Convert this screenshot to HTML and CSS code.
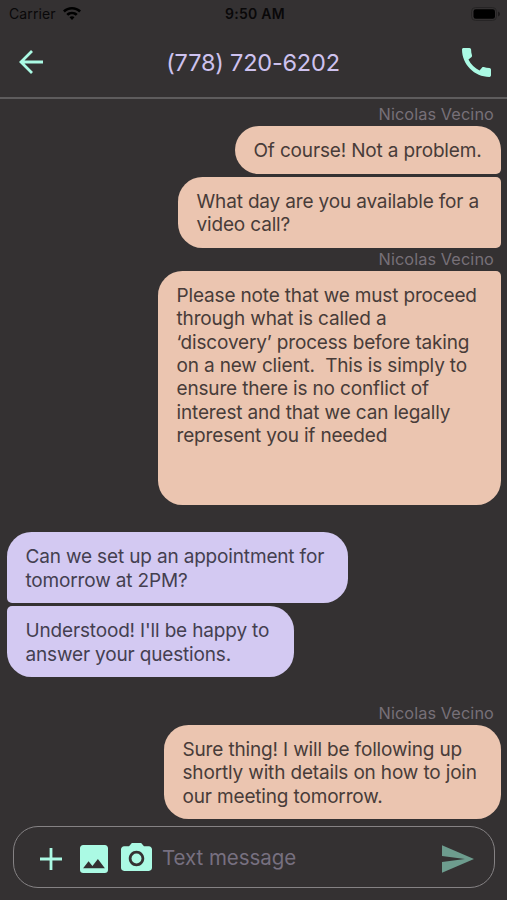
FILE: index.html
```html
<!DOCTYPE html>
<html lang="en">
<head>
<meta charset="utf-8">
<title>Messages</title>
<link rel="stylesheet" href="styles.css">
</head>
<body>
<div class="phone">
  <div class="status">
    <div class="carrier"><span>Carrier</span>
      <svg class="wifi" viewBox="0 0 18 14"><path d="M9 0C5.500 0 2.400 1.300 0 3.500L1.800 5.400C3.700 3.700 6.200 2.600 9 2.600s5.300 1.100 7.200 2.800L18 3.500C15.600 1.300 12.500 0 9 0zM9 4.700c-2.200 0-4.200.8-5.700 2.200l1.900 1.900C6.200 7.900 7.500 7.300 9 7.300s2.800.6 3.800 1.500l1.900-1.900C13.200 5.500 11.200 4.700 9 4.700zM9 9.300c-1 0-1.900.4-2.500 1L9 13l2.500-2.700C10.900 9.700 10 9.300 9 9.300z"/></svg>
    </div>
    <div class="clock">9:50 AM</div>
    <svg class="battery" viewBox="0 0 30 14"><rect x=".5" y=".5" width="25" height="13" rx="4" fill="none" stroke="#262425"/><rect x="2.500" y="2.300" width="21.500" height="9.500" rx="2.300"/><path d="M27 4.500c1.300.4 2 1.300 2 2.500s-.7 2.100-2 2.500z" fill="#1d1b1c"/></svg>
  </div>
  <header class="header">
    <svg class="back" viewBox="0 0 24 24"><path d="M23.500 12H1.500M12.500 1L1.500 12l11 11" fill="none" stroke="#abfae4" stroke-width="2.800"/></svg>
    <h1 class="title">(778) 720-6202</h1>
    <svg class="call" viewBox="3 3 18 18"><path fill="#abfae4" d="M20.010 15.380c-1.230 0-2.420-.2-3.530-.56-.35-.12-.74-.03-1.010.24l-1.570 1.970c-2.830-1.350-5.480-3.900-6.890-6.830l1.950-1.660c.27-.28.35-.67.24-1.020-.37-1.110-.56-2.300-.56-3.530 0-.54-.45-.99-.99-.99H4.190C3.650 3 3 3.240 3 3.990 3 13.280 10.730 21 20.010 21c.71 0 .99-.63.99-1.180v-3.450c0-.54-.45-.99-.99-.99z"/></svg>
  </header>
  <main class="thread">
    <div class="sender">Nicolas Vecino</div>
    <div class="bubble out first w-a">Of course! Not a problem.</div>
    <div class="bubble out last-flat w-b">What day are you available for a<br>video call?</div>
    <div class="sender">Nicolas Vecino</div>
    <div class="bubble out flat-top w-c">Please note that we must proceed<br>through what is called a<br>‘discovery’ process before taking<br>on a new client.&nbsp; This is simply to<br>ensure there is no conflict of<br>interest and that we can legally<br>represent you if needed</div>
    <div class="bubble in in-first w-d">Can we set up an appointment for<br>tomorrow at 2PM?</div>
    <div class="bubble in in-last w-e">Understood! I'll be happy to<br>answer your questions.</div>
    <div class="sender">Nicolas Vecino</div>
    <div class="bubble out w-f">Sure thing! I will be following up<br>shortly with details on how to join<br>our meeting tomorrow.</div>
  </main>
  <footer class="composer">
    <svg class="plus" viewBox="0 0 22 22"><path d="M11 0v22M0 11h22" stroke="#abfae4" stroke-width="2.800"/></svg>
    <svg class="photo" viewBox="3 3 18 18"><path fill="#abfae4" d="M21 19V5c0-1.100-.9-2-2-2H5c-1.100 0-2 .9-2 2v14c0 1.100.9 2 2 2h14c1.100 0 2-.9 2-2zM8.500 13.500l2.500 3.010L14.500 12l4.500 6H5l3.500-4.500z"/></svg>
    <svg class="camera" viewBox="2 2 20 18"><path fill="#abfae4" fill-rule="evenodd" d="M9 2L7.170 4H4c-1.100 0-2 .9-2 2v12c0 1.100.9 2 2 2h16c1.100 0 2-.9 2-2V6c0-1.100-.9-2-2-2h-3.170L15 2H9zm3 15c-2.760 0-5-2.240-5-5s2.240-5 5-5 5 2.240 5 5-2.240 5-5 5z"/><circle cx="12" cy="12" r="3.200" fill="#abfae4"/></svg>
    <span class="placeholder">Text message</span>
    <svg class="send" viewBox="2 3 21 18"><path fill="#6d9c8e" d="M2.010 21L23 12 2.010 3 2 10l15 2-15 2z"/></svg>
  </footer>
</div>
</body>
</html>
```

FILE: styles.css
```css
* { box-sizing: border-box; }
body { margin: 0; background: #343132; font-family: Inter, "Liberation Sans", sans-serif; }
svg { display: block; flex: none; }
.phone { width: 507px; height: 900px; overflow: hidden; display: flex; flex-direction: column; background: #343132; }
.status { height: 27px; flex: none; display: grid; grid-template-columns: 1fr auto 1fr; align-items: center; padding: 0 6px 0 9px; font-size: 14px; color: #090809; }
.carrier { display: flex; align-items: center; gap: 7px; letter-spacing: 0.1px; }
.wifi { width: 18px; height: 14px; }
.clock { font-weight: 600; letter-spacing: 0.25px; }
.battery { width: 30px; height: 14px; justify-self: end; }
.header { height: 72px; flex: none; display: flex; align-items: center; justify-content: space-between; padding: 0 16px 0 19px; border-bottom: 2px solid #5e5c5d; }
.back { width: 25px; height: 24px; }
.title { margin: 0; font-size: 23.5px; font-weight: 400; color: #cec2ef; letter-spacing: -0.2px; }
.call { width: 29px; height: 29px; }
.thread { display: flex; flex-direction: column; flex: none; height: 720px; padding: 4px 6px 0 7px; }
.sender { align-self: flex-end; height: 20px; margin: 1px 7px 2px 0; line-height: 20px; font-size: 16.3px; letter-spacing: 0.1px; color: #777078; }
.bubble { flex: none; padding: 13px 0 11px 18.500px; border-radius: 24.500px; font-size: 19px; line-height: 23.400px; letter-spacing: -0.16px; white-space: nowrap; }
.out { align-self: flex-end; background: #ebc5b0; color: #483c39; }
.in { align-self: flex-start; background: #d3c9f2; color: #443f50; }
.first { border-bottom-right-radius: 5px; }
.last-flat { border-top-right-radius: 5px; border-bottom-right-radius: 5px; }
.flat-top { border-top-right-radius: 5px; }
.in-first { border-bottom-left-radius: 5px; margin-top: 27px; }
.in-last { border-top-left-radius: 5px; margin: 3px 0 25px; }
.w-a { width: 266px; height: 47.500px; }
.w-b { width: 323px; margin: 3.500px 0 0; }
.w-c { width: 343px; height: 234.500px; }
.w-d { width: 341px; }
.w-e { width: 287px; }
.w-f { width: 337px; }
.composer { width: 482px; height: 62px; margin: 7px 0 0 13px; flex: none; display: flex; align-items: center; padding: 0 20px 0 26px; border: 1.500px solid #858284; border-radius: 25px; }
.plus { width: 22px; height: 22px; margin-top: 3px; }
.photo { width: 28px; height: 28px; margin: 3px 0 0 18px; }
.camera { width: 31px; height: 28px; margin-left: 13px; }
.placeholder { flex: 1; margin-left: 10px; font-size: 20.5px; letter-spacing: -0.05px; color: #777080; }
.send { width: 32px; height: 28px; margin-top: 3px; }
```
